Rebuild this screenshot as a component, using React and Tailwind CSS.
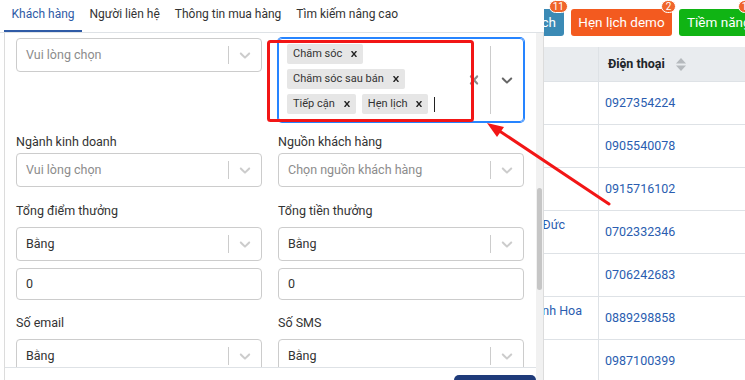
import React from 'react';

const CHEVRON =
  'M4.516 7.548c0.436-0.446 1.043-0.481 1.576 0l3.908 3.747 3.908-3.747c0.533-0.481 1.141-0.446 1.574 0 0.436 0.445 0.408 1.197 0 1.615-0.406 0.418-4.695 4.502-4.695 4.502-0.217 0.223-0.502 0.335-0.787 0.335s-0.57-0.112-0.789-0.335c0 0-4.287-4.084-4.695-4.502s-0.436-1.17 0-1.615z';
const CROSS =
  'M14.348 14.849c-0.469 0.469-1.229 0.469-1.697 0l-2.651-3.030-2.651 3.029c-0.469 0.469-1.229 0.469-1.697 0-0.469-0.469-0.469-1.229 0-1.697l2.758-3.15-2.759-3.152c-0.469-0.469-0.469-1.228 0-1.697s1.228-0.469 1.697 0l2.652 3.031 2.651-3.031c0.469-0.469 1.228-0.469 1.697 0s0.469 1.229 0 1.697l-2.758 3.152 2.758 3.15c0.469 0.469 0.469 1.229 0 1.698z';

const Icon = ({ d, size, color }) => (
  <svg width={size} height={size} viewBox="0 0 20 20" fill={color}>
    <path d={d} />
  </svg>
);

const tabs = ['Khách hàng', 'Người liên hệ', 'Thông tin mua hàng', 'Tìm kiếm nâng cao'];

const phones = [
  { phone: '0927354224' },
  { phone: '0905540078' },
  { phone: '0915716102' },
  { phone: '0702332346', name: 'Nguyễn Minh Đức', pad: 'pr-[33px]' },
  { phone: '0706242683' },
  { phone: '0889298858', name: 'Trần Thị Kinh Hoa', pad: 'pr-[16px]' },
  { phone: '0987100399' },
];

const Select = ({ text, placeholder }) => (
  <div className="flex h-[34px] items-center rounded-[4px] border border-[#cccccc] bg-white">
    <div className={`flex-1 truncate pl-[9px] ${placeholder ? 'text-[#8c8c8c]' : 'text-[#333333]'}`}>{text}</div>
    <span className="h-[18px] w-px bg-[#cccccc]" />
    <div className="flex w-[32px] justify-center">
      <Icon d={CHEVRON} size={18} color="#cccccc" />
    </div>
  </div>
);

const Input = ({ value }) => (
  <div className="mt-[7px] flex h-[32px] items-center rounded-[4px] border border-[#cccccc] pl-[9px] text-[#333333]">
    {value}
  </div>
);

const Field = ({ label, gap = 'mb-[6px]', children }) => (
  <div>
    <div className={`${gap} leading-[20px] text-[#333333]`}>{label}</div>
    {children}
  </div>
);

const Tag = ({ text }) => (
  <div className="flex h-[20px] items-center rounded-[2px] bg-[#e6e6e6] text-[11px] text-[#333333]">
    <span className="pl-[6px] pr-[3px]">{text}</span>
    <span className="flex px-[3px]">
      <Icon d={CROSS} size={12} color="#222222" />
    </span>
  </div>
);

const MultiSelect = () => (
  <div className="flex h-[84px] rounded-[4px] border border-[#2684ff] shadow-[0_0_0_1px_#2684ff]">
    <div className="flex flex-1 flex-col gap-[5px] pl-[8px] pt-[5px]">
      <div className="flex">
        <Tag text="Chăm sóc" />
      </div>
      <div className="flex">
        <Tag text="Chăm sóc sau bán" />
      </div>
      <div className="flex items-center gap-[6px]">
        <Tag text="Tiếp cận" />
        <Tag text="Hẹn lịch" />
        <span className="h-[15px] w-px bg-[#222222]" />
      </div>
    </div>
    <div className="flex w-[32px] items-center justify-center">
      <Icon d={CROSS} size={18} color="#8a8a8a" />
    </div>
    <span className="my-[7px] w-px bg-[#cccccc]" />
    <div className="flex w-[32px] items-center justify-center">
      <Icon d={CHEVRON} size={18} color="#666666" />
    </div>
  </div>
);

const Badge = ({ n }) => (
  <span className="absolute -right-[4px] -top-[9px] h-[13px] min-w-[15px] rounded-full border border-white bg-[#f0652b] px-[3px] text-center text-[10px] leading-[11px] text-white">
    {n}
  </span>
);

const SortIcon = () => (
  <svg width="10" height="13" viewBox="0 0 10 13" fill="#b5b9bd">
    <path d="M0 5.5 L5 0 L10 5.5 Z" />
    <path d="M0 7.5 L5 13 L10 7.5 Z" />
  </svg>
);

export default function App() {
  return (
    <div className="relative h-[380px] w-[745px] overflow-hidden bg-white font-['Roboto',sans-serif] text-[12.5px]">
      {/* page behind the modal */}
      <div className="pt-[9px]">
        <div className="flex gap-[7px] pl-[420px] text-[13.5px] text-white">
          <div className="relative flex h-[27px] w-[144px] shrink-0 items-center justify-end rounded-[3px] bg-[#3b8ab5] pr-[8px]">
            Đã đặt lịch
            <Badge n="11" />
          </div>
          <div className="relative flex h-[27px] w-[101px] shrink-0 items-center justify-center whitespace-nowrap rounded-[3px] bg-[#f35a1f]">
            Hẹn lịch demo
            <Badge n="2" />
          </div>
          <div className="relative flex h-[27px] w-[74px] shrink-0 items-center whitespace-nowrap rounded-[3px] bg-[#10b414] pl-[8px]">
            Tiềm năng
            <Badge n="15" />
          </div>
        </div>

        <div className="mt-[11px]">
          <div className="flex h-[35px] border-b border-[#dee2e6] bg-[#e9ecef]">
            <div className="w-[598px] shrink-0" />
            <div className="flex flex-1 items-center border-l border-[#dee2e6] pl-[9px] font-bold text-[#212529]">
              Điện thoại
              <span className="ml-[11px] flex">
                <SortIcon />
              </span>
            </div>
          </div>
          {phones.map((row) => (
            <div key={row.phone} className="flex h-[43px] border-b border-[#dee2e6]">
              <div className={`flex w-[598px] shrink-0 justify-end pt-[4px] leading-[20px] text-[#2a5db0] ${row.pad || ''}`}>
                {row.name}
              </div>
              <div className="flex flex-1 items-center border-l border-[#dee2e6] pl-[6px] text-[#2a5db0]">{row.phone}</div>
            </div>
          ))}
        </div>
      </div>

      {/* search modal */}
      <div className="absolute left-0 top-0 flex h-[380px] w-[544px] flex-col bg-white">
        <div className="flex h-[33px] shrink-0 border-b border-[#dee2e6] pl-[4px] text-[12px]">
          {tabs.map((t, i) => (
            <div
              key={t}
              className={`-mb-px flex h-[32px] items-center whitespace-nowrap px-[7.5px] pb-[2px] ${
                i === 0 ? 'border-b-2 border-[#2f5ba6] text-[#2f5ba6]' : 'border-b-2 border-transparent text-[#333333]'
              }`}
            >
              {t}
            </div>
          ))}
        </div>

        <div className="ml-[4px] flex min-h-0 flex-1 border-l border-r border-[#dcdcdc]">
          <div className="flex min-w-0 flex-1 flex-col">
            <div className="h-[334px] shrink-0 overflow-hidden">
              <div className="-mt-[18px] flex flex-col pl-[11px] pr-[12px]">
                <div className="grid grid-cols-2 gap-x-[16px]">
                  <Field label="Nhân viên" gap="mb-[3px]">
                    <Select text="Vui lòng chọn" placeholder />
                  </Field>
                  <Field label="Trạng thái" gap="mb-[3px]">
                    <MultiSelect />
                  </Field>
                </div>

                <div className="mt-[10px] grid grid-cols-2 gap-x-[16px]">
                  <Field label="Ngành kinh doanh" gap="mb-[1px]">
                    <Select text="Vui lòng chọn" placeholder />
                  </Field>
                  <Field label="Nguồn khách hàng" gap="mb-[1px]">
                    <Select text="Chọn nguồn khách hàng" placeholder />
                  </Field>
                </div>

                <div className="mt-[14px] grid grid-cols-2 gap-x-[16px]">
                  <Field label="Tổng điểm thưởng">
                    <Select text="Bằng" />
                    <Input value="0" />
                  </Field>
                  <Field label="Tổng tiền thưởng">
                    <Select text="Bằng" />
                    <Input value="0" />
                  </Field>
                </div>

                <div className="mt-[13px] grid grid-cols-2 gap-x-[16px]">
                  <Field label="Số email">
                    <Select text="Bằng" />
                    <Input value="0" />
                  </Field>
                  <Field label="Số SMS">
                    <Select text="Bằng" />
                    <Input value="0" />
                  </Field>
                </div>
              </div>
            </div>
            <div className="flex flex-1 justify-end border-t border-[#dee2e6] pt-[7px]">
              <div className="flex h-[30px] w-[82px] items-center justify-center rounded-[5px] bg-[#1f3b7a] text-white">
                Tìm kiếm
              </div>
            </div>
          </div>
          <div className="w-[7px] shrink-0 bg-[#f1f1f1] px-[1px]">
            <div className="mt-[155px] h-[102px] rounded-full bg-[#c6c6c6]" />
          </div>
        </div>
      </div>

      {/* red annotation */}
      <svg className="pointer-events-none absolute left-0 top-0" width="745" height="380">
        <rect x="268.5" y="41.5" width="204" height="79" rx="2" fill="none" stroke="#f21616" strokeWidth="3" />
        <line x1="609" y1="204" x2="498" y2="130" stroke="#f21616" strokeWidth="3" strokeLinecap="round" />
        <polygon points="487,123 497,137 504,127" fill="#f21616" />
      </svg>
    </div>
  );
}
